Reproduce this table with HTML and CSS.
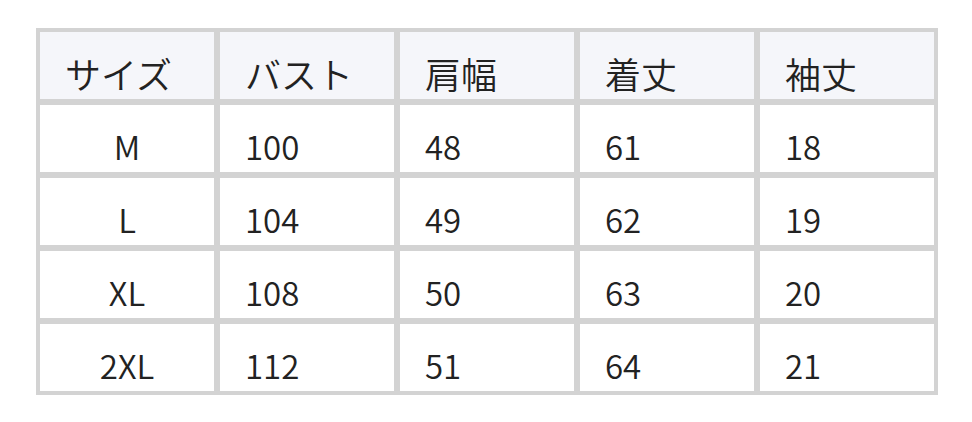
FILE: index.html
```html
<!DOCTYPE html>
<html lang="ja">
<head>
<meta charset="utf-8">
<link rel="stylesheet" href="styles.css">
</head>
<body>
<div class="wrap">
<table class="size-table">
  <thead>
    <tr><th>サイズ</th><th>バスト</th><th>肩幅</th><th>着丈</th><th>袖丈</th></tr>
  </thead>
  <tbody>
    <tr><td class="size">M</td><td>100</td><td>48</td><td>61</td><td>18</td></tr>
    <tr><td class="size">L</td><td>104</td><td>49</td><td>62</td><td>19</td></tr>
    <tr><td class="size">XL</td><td>108</td><td>50</td><td>63</td><td>20</td></tr>
    <tr><td class="size">2XL</td><td>112</td><td>51</td><td>64</td><td>21</td></tr>
  </tbody>
</table>
</div>
</body>
</html>
```
FILE: styles.css
```css
html, body {
  margin: 0;
  background: #fff;
}
.wrap {
  padding: 28px 0 0 36px;
}
.size-table {
  border-collapse: separate;
  border-spacing: 0;
  border: 1px solid #d3d3d3;
  table-layout: fixed;
  width: 902px;
  font-family: "Noto Sans CJK JP", "Noto Sans", sans-serif;
  font-size: 33px;
  font-weight: 350;
  color: #222;
}
.size-table th,
.size-table td {
  border: 3px solid #d3d3d3;
  padding: 21px 10px 6px 25px;
  line-height: 40px;
  height: 40px;
  text-align: left;
  font-weight: 350;
  vertical-align: middle;
  white-space: nowrap;
}
.size-table th {
  background: #f5f6fa;
  font-size: 36px;
  padding-top: 21px;
  padding-bottom: 6px;
}
.size-table td.size {
  text-align: center;
  padding-left: 10px;
}
```
